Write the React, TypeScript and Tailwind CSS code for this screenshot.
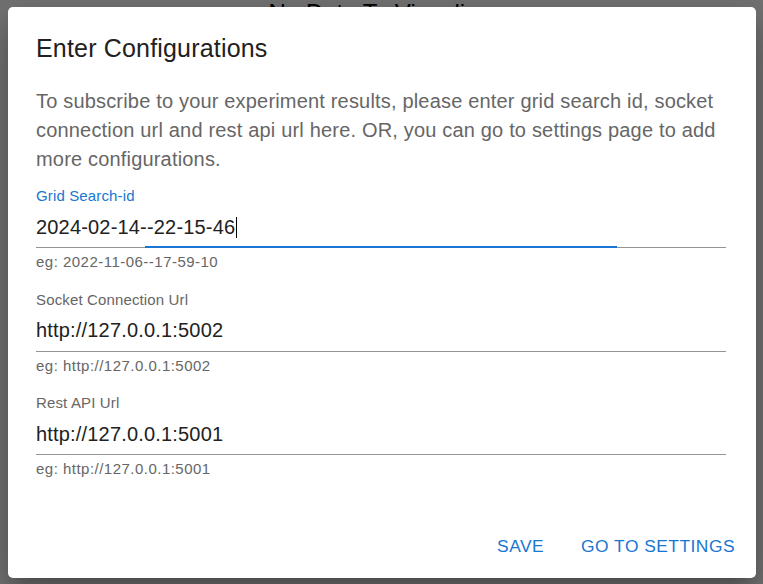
import React from "react";

const fields = [
  { label: "Grid Search-id", value: "2024-02-14--22-15-46", hint: "eg: 2022-11-06--17-59-10", focused: true },
  { label: "Socket Connection Url", value: "http://127.0.0.1:5002", hint: "eg: http://127.0.0.1:5002", focused: false },
  { label: "Rest API Url", value: "http://127.0.0.1:5001", hint: "eg: http://127.0.0.1:5001", focused: false },
];

function Field({ label, value, hint, focused }: { label: string; value: string; hint: string; focused: boolean }) {
  return (
    <div className="flex flex-col">
      <label
        className={`h-[17px] text-[15px] leading-[17px] tracking-[0.14px] ${
          focused ? "text-[#1976d2]" : "text-[#666666]"
        }`}
      >
        {label}
      </label>
      <div className="relative mt-[4.5px] h-[39.5px] border-b border-[#949494] pt-[5px]">
        <div className="flex items-center text-[20px] leading-[27.6px] tracking-[0.18px] text-[#212121]">
          {value}
          {focused && <span className="ml-px inline-block h-[21px] w-px bg-black" />}
        </div>
        {focused && <div className="absolute bottom-[-1px] left-[109px] h-[2px] w-[472px] bg-[#1976d2]" />}
      </div>
      <p className="mt-[2px] text-[15px] leading-[24px] tracking-[0.48px] text-[#666666]">{hint}</p>
    </div>
  );
}

export default function App() {
  return (
    <div
      className="relative h-[584px] w-full overflow-hidden bg-white"
      style={{ fontFamily: '"Liberation Sans", Arial, sans-serif' }}
    >
      <h1 className="pr-[4px] pt-px text-center text-[24px] leading-[24px] text-black">No Data To Visualize</h1>

      <div className="absolute inset-0 bg-black/55 pl-[8px] pt-[7px]">
        <div className="flex h-[571px] w-[748px] flex-col rounded-[5px] bg-white shadow-[0_11px_15px_-7px_rgba(0,0,0,0.2),0_24px_38px_3px_rgba(0,0,0,0.14),0_9px_46px_8px_rgba(0,0,0,0.12)]">
          <h2 className="pl-[28px] pt-[22px] text-[25px] font-medium leading-[38.4px] tracking-[0.18px] text-[#212121]">
            Enter Configurations
          </h2>
          <div className="pl-[28px] pr-[30px]">
            <p className="mt-[20px] text-[20px] leading-[29px] tracking-[0.18px] text-[#666666]">
              To subscribe to your experiment results, please enter grid search id, socket connection url and rest api
              url here. OR, you can go to settings page to add more configurations.
            </p>
            <div className="mt-[13px] flex flex-col gap-[16.5px]">
              {fields.map((f) => (
                <Field key={f.label} {...f} />
              ))}
            </div>
          </div>
          <div className="mt-auto flex justify-end gap-[37px] pb-[16.5px] pr-[21px]">
            <button className="text-[17.4px] font-medium uppercase leading-[29.4px] tracking-[0.48px] text-[#1976d2]">
              Save
            </button>
            <button className="text-[17.4px] font-medium uppercase leading-[29.4px] tracking-[0.48px] text-[#1976d2]">
              Go to Settings
            </button>
          </div>
        </div>
      </div>
    </div>
  );
}
